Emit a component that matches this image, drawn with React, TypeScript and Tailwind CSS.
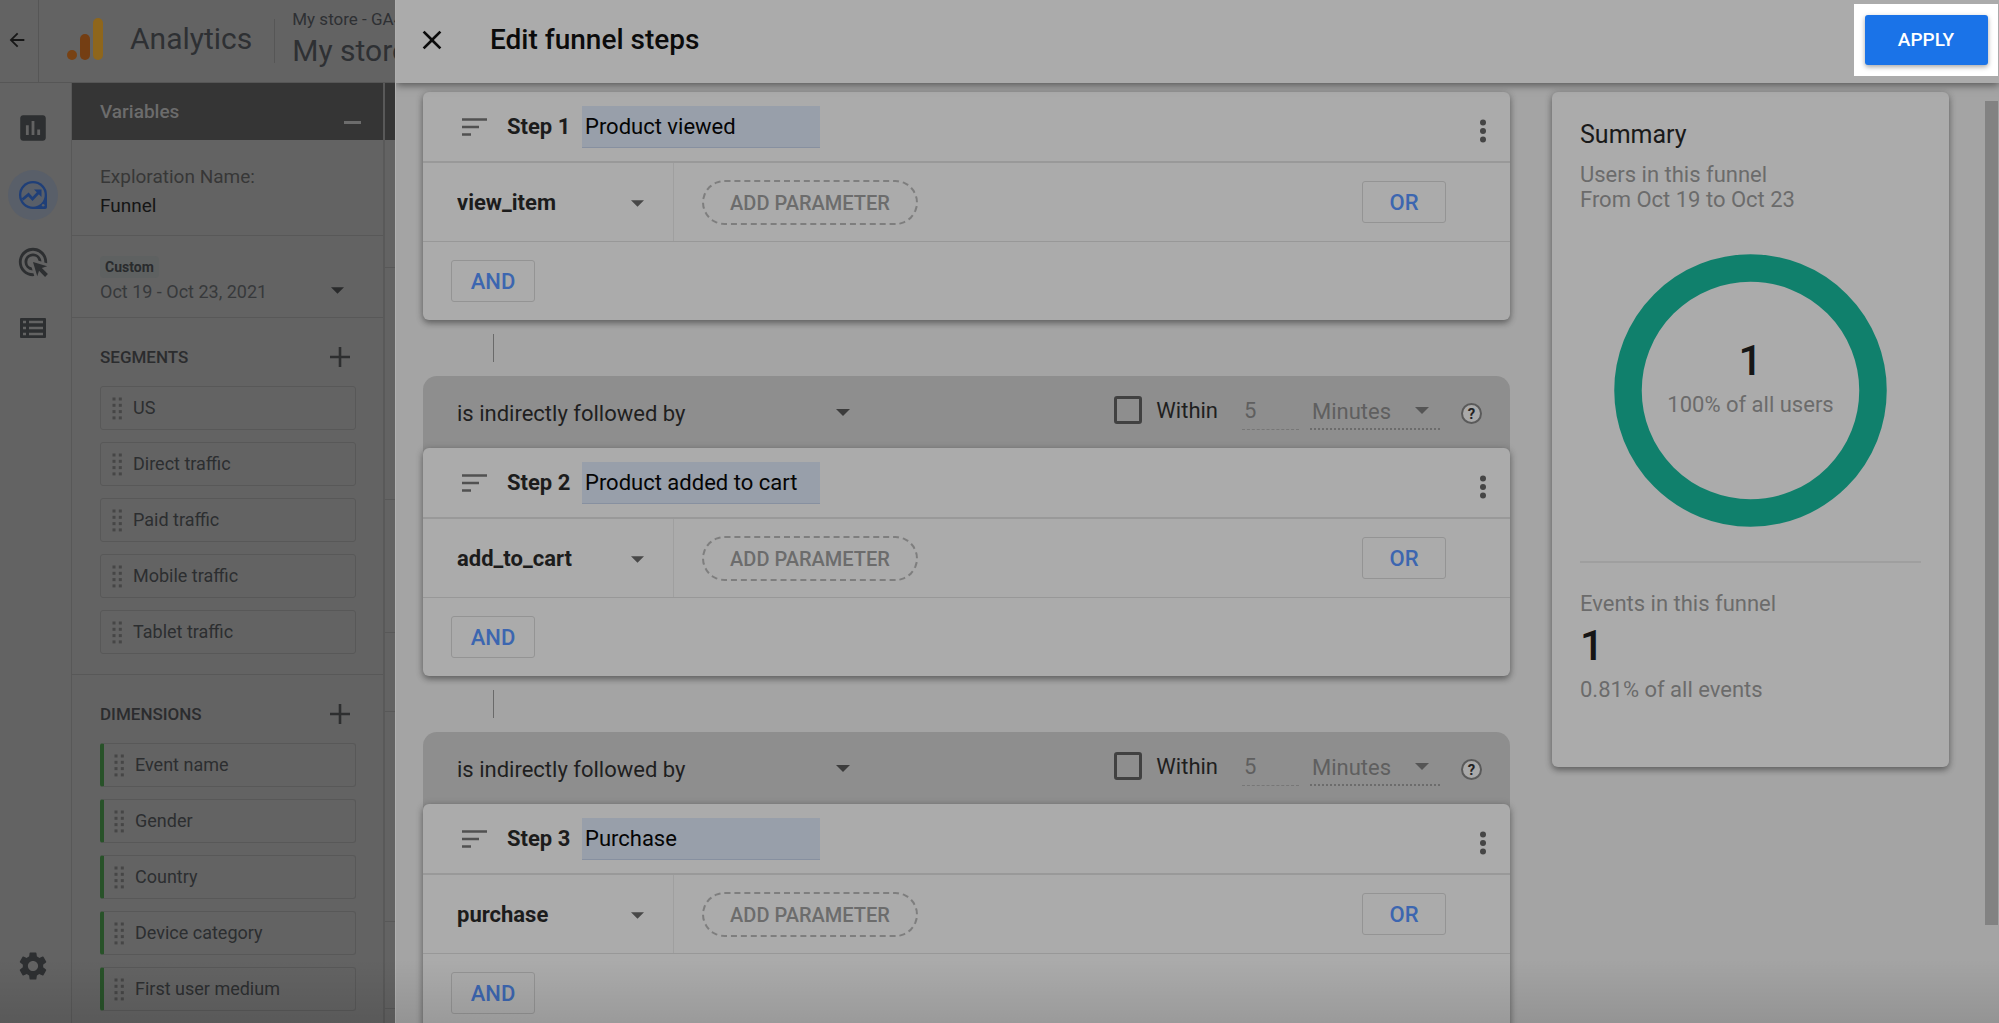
import React, { useState } from 'react';
import { MdAdsClick, MdArrowBack, MdAssessment, MdClose, MdSettings } from 'react-icons/md';

interface FunnelStep {
  id: number;
  name: string;
  event: string;
}

const initialSteps: FunnelStep[] = [
  { id: 1, name: 'Product viewed', event: 'view_item' },
  { id: 2, name: 'Product added to cart', event: 'add_to_cart' },
  { id: 3, name: 'Purchase', event: 'purchase' },
];

const eventNames = ['view_item', 'add_to_cart', 'purchase'];
const segments = ['US', 'Direct traffic', 'Paid traffic', 'Mobile traffic', 'Tablet traffic'];
const dimensions = ['Event name', 'Gender', 'Country', 'Device category', 'First user medium'];

const Caret: React.FC<{ className?: string }> = ({ className }) => (
  <svg viewBox="0 0 14 7" className={`pointer-events-none ${className ?? ''}`} aria-hidden="true">
    <path d="M0 0h14L7 7z" fill="currentColor" />
  </svg>
);

const AnalyticsLogo: React.FC = () => (
  <svg width="36" height="42" viewBox="0 0 36 42" aria-hidden="true">
    <circle cx="5" cy="37" r="5" fill="#784214" />
    <rect x="13" y="16" width="10" height="26" rx="5" fill="#743e13" />
    <rect x="26" y="0" width="10" height="42" rx="5" fill="#8e661c" />
  </svg>
);

const ExploreIcon: React.FC = () => (
  <svg width="28" height="28" viewBox="0 0 28 28" aria-hidden="true">
    <path d="M14 0a14 14 0 1 0 0 28h12a2 2 0 0 0 2-2V14A14 14 0 0 0 14 0z" fill="#1f3f78" />
    <circle cx="14" cy="14" r="11.7" fill="#595f69" />
    <circle cx="24.2" cy="24.3" r="1.3" fill="#595f69" />
    <path d="M3.500 18.500l6-5 4 4.500 6.500-7" fill="none" stroke="#1f3f78" strokeWidth="2.800" />
    <path d="M15 8.500h7.500V16z" fill="#1f3f78" />
  </svg>
);

const TableIcon: React.FC = () => (
  <svg width="26" height="20" viewBox="0 0 26 20" fill="none" aria-hidden="true">
    <rect width="26" height="20" rx="1" fill="#2d2f31" />
    <path d="M3 4h3M3 10h3M3 16h3M9 4h14M9 10h14M9 16h14" stroke="#636363" strokeWidth="2.500" />
  </svg>
);

const DragDots: React.FC = () => (
  <svg width="11" height="23" viewBox="0 0 11 23" fill="#464646" aria-hidden="true">
    {[0, 1, 2, 3].map((row) => (
      <g key={row}>
        <rect x="0.500" y={0.5 + row * 6.3} width="3" height="3" />
        <rect x="6.800" y={0.5 + row * 6.3} width="3" height="3" />
      </g>
    ))}
  </svg>
);

const PlusIcon: React.FC = () => (
  <svg width="20" height="20" viewBox="0 0 20 20" aria-hidden="true">
    <path d="M10 0v20M0 10h20" stroke="#2e2f30" strokeWidth="2.600" />
  </svg>
);

const TopBar: React.FC = () => (
  <header className="flex h-[83px] shrink-0 items-center border-b border-[#565656]">
    <button type="button" aria-label="Back" className="flex h-full w-[39px] items-center border-r border-[#565656] pb-[2px] pl-[6px] text-[#171717]">
      <MdArrowBack className="size-[22px]" />
    </button>
    <div className="flex items-center pb-1 pl-7">
      <AnalyticsLogo />
      <span className="ml-[27px] text-[30px] leading-9 text-[#2e3033]">Analytics</span>
    </div>
    <div className="ml-[22px] h-11 w-px bg-[#565656]" />
    <div className="ml-[17px] whitespace-nowrap pb-2 text-[#2e3033]">
      <p className="text-[17px] leading-7">My store - GA4</p>
      <p className="text-[30px] leading-9">My store</p>
    </div>
  </header>
);

const NavRail: React.FC = () => (
  <nav className="flex w-[72px] shrink-0 flex-col items-center border-r border-[#585858] pb-10 pr-[5px] text-[#2d2f31]">
    <button type="button" aria-label="Reports" className="mt-7 flex size-[34px] items-center justify-center">
      <MdAssessment className="size-[34px]" />
    </button>
    <button type="button" aria-label="Explore" className="mt-[25px] flex size-[50px] items-center justify-center rounded-full bg-[#595f69]">
      <ExploreIcon />
    </button>
    <button type="button" aria-label="Advertising" className="mt-[25px] flex size-[34px] items-center justify-center">
      <MdAdsClick className="size-[34px]" />
    </button>
    <button type="button" aria-label="Configure" className="mt-8 flex size-[34px] items-center justify-center">
      <TableIcon />
    </button>
    <button type="button" aria-label="Admin" className="mt-auto flex size-[34px] items-center justify-center">
      <MdSettings className="size-[34px]" />
    </button>
  </nav>
);

interface VariableListProps {
  title: string;
  items: string[];
  accent?: boolean;
}

const VariableList: React.FC<VariableListProps> = ({ title, items, accent = false }) => (
  <section className="border-b border-[#585858] pb-5 pl-7 pr-[27px] pt-5">
    <div className="flex h-[38px] items-center justify-between pr-[6px]">
      <h3 className="text-[17px] font-medium leading-6 text-[#2b2c2e]">{title}</h3>
      <button type="button" aria-label={`Add ${title.toLowerCase()}`}>
        <PlusIcon />
      </button>
    </div>
    <ul className="mt-[10px] flex flex-col gap-3">
      {items.map((item) => (
        <li
          key={item}
          className={`flex h-11 items-center rounded-[3px] border border-[#585858] text-[18px] leading-6 text-[#2c2e30] ${
            accent ? 'border-l-4 border-l-[#285229] pl-[10px]' : 'pl-[11px]'
          }`}
        >
          <DragDots />
          <span className="ml-[10px]">{item}</span>
        </li>
      ))}
    </ul>
  </section>
);

const VariablesPanel: React.FC = () => (
  <aside className="w-[313px] shrink-0 border-r-2 border-[#595959]">
    <div className="flex h-[57px] items-center justify-between bg-[#353535] pl-7 pr-[22px]">
      <h2 className="text-[19px] font-medium leading-6 text-[#6c6c6c]">Variables</h2>
      <button type="button" aria-label="Collapse variables" className="flex h-full items-end pb-4">
        <span className="h-[3px] w-[17px] bg-[#6c6c6c]" />
      </button>
    </div>
    <section className="h-24 border-b border-[#585858] pl-7 pt-[22px] text-[19px] leading-[29px]">
      <p className="text-[#373737]">Exploration Name:</p>
      <p className="text-[#151515]">Funnel</p>
    </section>
    <section className="h-[82px] border-b border-[#585858] pl-7 pr-[39px] pt-5">
      <span className="block w-fit rounded-sm bg-[#5e6161] px-[5px] text-[14px] font-bold leading-[22px] text-[#292b2d]">Custom</span>
      <button type="button" className="flex h-7 w-full items-center justify-between text-[18px] leading-7 text-[#37393b]">
        Oct 19 - Oct 23, 2021
        <Caret className="mb-1 h-[7px] w-[13px] text-[#292a2b]" />
      </button>
    </section>
    <VariableList title="SEGMENTS" items={segments} />
    <VariableList title="DIMENSIONS" items={dimensions} accent />
  </aside>
);

// Only a sliver of the settings column stays visible beside the drawer
const SettingsColumn: React.FC = () => (
  <div className="flex-1">
    <div className="h-[57px] bg-[#353535]" />
    <div className="h-32 border-b border-[#585858]" />
    <div className="h-[232px] border-b border-[#585858]" />
    <div className="h-[133px] border-b border-[#585858]" />
    <div className="h-[79px] border-b border-[#585858]" />
    <div className="h-[210px] border-b border-[#585858]" />
    <div className="h-[87px] border-b border-[#585858]" />
  </div>
);

const FollowBar: React.FC<{ id: number }> = ({ id }) => {
  const [within, setWithin] = useState(false);

  return (
    <div className="-mb-2 flex h-20 items-start rounded-t-[14px] bg-[#8e8e8e] pl-[34px] pr-7 text-[22px] leading-8 text-[#1f1f1f]">
      <div className="relative mt-[22px] w-[393px]">
        <select aria-label={`Relation to step ${id}`} className="w-full appearance-none">
          <option>is indirectly followed by</option>
          <option>is directly followed by</option>
        </select>
        <Caret className="absolute right-0 top-[11px] h-[7px] w-[14px] text-[#3c3c3c]" />
      </div>
      <div className="ml-auto flex items-start">
        <input
          id={`within-${id}`}
          type="checkbox"
          checked={within}
          onChange={() => setWithin(!within)}
          className="mt-5 size-7 appearance-none rounded-[3px] border-3 border-[#414141] checked:bg-[#414141]"
        />
        <label htmlFor={`within-${id}`} className="ml-[14px] mt-[19px]">Within</label>
        <input
          aria-label="Time limit"
          defaultValue="5"
          disabled
          className="ml-6 mt-[19px] h-[35px] w-[57px] border-b border-dashed border-[#777777] px-[2px] pb-[3px] text-[#5f5f5f]"
        />
        <div className="relative ml-[11px] mt-5 w-[130px] border-b-2 border-dotted border-[#6c6c6c] text-[#5f5f5f]">
          <select aria-label="Time unit" disabled className="h-8 w-full appearance-none pl-[2px] opacity-100">
            <option>Minutes</option>
          </select>
          <Caret className="absolute right-[11px] top-[11px] h-[7px] w-[14px] text-[#555555]" />
        </div>
        <button
          type="button"
          aria-label="Help"
          className="ml-[21px] mt-[27px] flex size-[21px] items-center justify-center rounded-full border-2 border-[#5a5a5a] bg-[#a9a9a9] text-[15px] font-bold leading-4 text-[#222222]"
        >
          ?
        </button>
      </div>
    </div>
  );
};

const StepCard: React.FC<{ step: FunnelStep }> = ({ step }) => (
  <article className="relative rounded-[6px] bg-[#ababab] shadow-[0_3px_6px_rgba(0,0,0,0.35),0_1px_8px_rgba(0,0,0,0.15)]">
    <div className="flex h-[71px] items-center border-b-2 border-[#999999] pl-[39px] pr-[23px]">
      <svg width="25" height="18" viewBox="0 0 25 18" className="shrink-0" aria-hidden="true">
        <path d="M0 1.500h25M0 9h17M0 16.500h9" stroke="#515151" strokeWidth="2.700" />
      </svg>
      <label htmlFor={`step-${step.id}`} className="ml-5 w-[75px] whitespace-nowrap text-[22px] font-bold leading-8 text-[#1c1c1c]">
        Step {step.id}
      </label>
      <input
        id={`step-${step.id}`}
        defaultValue={step.name}
        className="h-[42px] w-[238px] border-b border-[#8790a0] bg-[#989faa] px-[3px] text-[22px] leading-8 text-[#050505]"
      />
      <button type="button" aria-label={`Step ${step.id} options`} className="ml-auto pt-2">
        <svg width="8" height="24" viewBox="0 0 8 24" fill="#454545" aria-hidden="true">
          <circle cx="4" cy="3.500" r="3" />
          <circle cx="4" cy="12" r="3" />
          <circle cx="4" cy="20.500" r="3" />
        </svg>
      </button>
    </div>
    <div className="flex h-[79px] items-center border-b border-[#989898] pr-16">
      <div className="relative flex h-full w-[251px] items-center border-r border-[#9f9f9f] pl-[34px] pr-7 pt-px">
        <select
          aria-label={`Step ${step.id} event`}
          defaultValue={step.event}
          className="w-full appearance-none text-[22px] font-bold leading-8 text-[#1c1c1c]"
        >
          {eventNames.map((name) => (
            <option key={name}>{name}</option>
          ))}
        </select>
        <Caret className="absolute right-[29px] top-[37px] h-[7px] w-[13px] text-[#484848]" />
      </div>
      <button
        type="button"
        className="ml-7 h-[45px] w-[216px] rounded-full border-2 border-dashed border-[#7e7e7e] pt-px text-[20px] font-medium leading-6 text-[#6c6c6c]"
      >
        ADD PARAMETER
      </button>
      <button type="button" className="ml-auto h-[42px] w-[84px] rounded-[3px] border border-[#949494] pt-px text-[22px] font-medium leading-6 text-[#3c66b0]">
        OR
      </button>
    </div>
    <div className="flex h-[78px] items-center pl-7">
      <button type="button" className="h-[42px] w-[84px] rounded-[3px] border border-[#949494] pt-px text-[22px] font-medium leading-6 text-[#3c66b0]">
        AND
      </button>
    </div>
  </article>
);

const SummaryCard: React.FC = () => (
  <aside className="h-[675px] w-[397px] shrink-0 rounded-[6px] bg-[#ababab] px-7 pt-[25px] text-[22px] leading-[25px] text-[#6b6b6b] shadow-[0_3px_6px_rgba(0,0,0,0.35),0_1px_8px_rgba(0,0,0,0.15)]">
    <h2 className="text-[25px] leading-9 text-[#1a1a1a]">Summary</h2>
    <p className="mt-[9px]">Users in this funnel</p>
    <p>From Oct 19 to Oct 23</p>
    <div className="relative mt-[42px] flex justify-center">
      <svg width="273" height="273" viewBox="0 0 273 273" role="img" aria-label="100% of all users">
        <circle cx="136.500" cy="136.500" r="122.500" fill="none" stroke="#10806c" strokeWidth="27.500" />
      </svg>
      <div className="absolute inset-x-0 top-[82px] text-center">
        <p className="text-[42px] font-medium leading-[50px] text-[#161616]">1</p>
        <p className="mt-[6px]">100% of all users</p>
      </div>
    </div>
    <hr className="mt-[34px] border-t-2 border-[#9f9f9f]" />
    <p className="mt-7">Events in this funnel</p>
    <p className="mt-[5px] text-[42px] font-medium leading-[50px] text-[#161616]">1</p>
    <p className="mt-[6px]">0.81% of all events</p>
  </aside>
);

const FunnelDrawer: React.FC = () => (
  <div role="dialog" aria-label="Edit funnel steps" className="absolute inset-y-0 left-[395px] right-0 flex flex-col overflow-hidden border-l border-[#b0b0b0] bg-[#a4a4a4]">
    <header className="relative z-10 flex h-[83px] shrink-0 items-center bg-[#ababab] pb-1 pl-5 pr-px text-[#0b0b0b] shadow-[0_2px_8px_rgba(0,0,0,0.5)]">
      <button type="button" aria-label="Close">
        <MdClose className="size-8" />
      </button>
      <h1 className="ml-[42px] text-[28px] font-medium leading-9">Edit funnel steps</h1>
      <div className="ml-auto flex h-[72px] w-[144px] items-center justify-center bg-white">
        <button
          type="button"
          className="h-[50px] w-[123px] rounded-[3px] bg-[#1a73e8] text-[19px] font-medium leading-6 text-white shadow-[0_2px_5px_rgba(0,0,0,0.35)]"
        >
          APPLY
        </button>
      </div>
    </header>
    <div className="flex min-h-0 flex-1 overflow-hidden">
      <div className="flex min-w-0 flex-1 items-start gap-[42px] pl-[27px] pr-9 pt-[9px]">
        <div className="min-w-0 flex-1">
          {initialSteps.map((step, index) => (
            <React.Fragment key={step.id}>
              {index > 0 && (
                <>
                  <div className="my-[14px] ml-[70px] h-7 w-px bg-[#6a6a6a]" />
                  <FollowBar id={step.id} />
                </>
              )}
              <StepCard step={step} />
            </React.Fragment>
          ))}
        </div>
        <SummaryCard />
      </div>
      <div className="mr-px flex w-[13px] flex-col pb-[98px] pt-[18px]">
        <div className="flex-1 bg-[#828282]" />
      </div>
    </div>
  </div>
);

const App: React.FC = () => {
  return (
    <div className="relative flex h-screen flex-col overflow-hidden bg-[#636363] [font-family:Roboto,'Liberation_Sans',sans-serif]">
      <TopBar />
      <div className="flex min-h-0 flex-1 overflow-hidden">
        <NavRail />
        <VariablesPanel />
        <SettingsColumn />
      </div>
      <FunnelDrawer />
      <div className="pointer-events-none absolute inset-x-0 bottom-0 h-16 bg-linear-to-b from-transparent to-black/10" />
    </div>
  );
};

export default App;
